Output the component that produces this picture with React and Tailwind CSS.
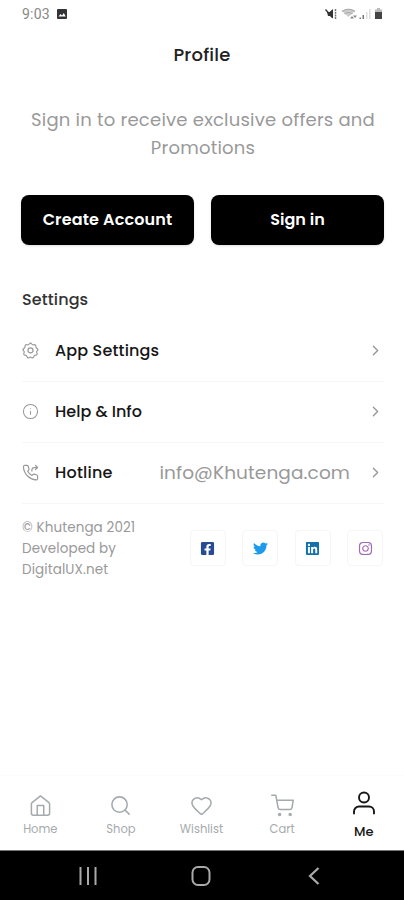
import { ChevronRight, Heart, Info, Search } from "lucide-react";
import {
  FaFacebookSquare,
  FaInstagram,
  FaLinkedin,
  FaTwitter,
} from "react-icons/fa";

const GearIcon = ({ className }) => (
  <svg
    viewBox="0 0 24 24"
    fill="none"
    stroke="currentColor"
    strokeWidth="1.7"
    strokeLinejoin="round"
    className={className}
  >
    <path d="M10.300 2.800q1.700-2.600 3.400 0 1 1.600 2.900 1.100 3-.7 2.900 2.300-.1 1.900 1.500 2.800 2.600 1.500.4 3.500-1.400 1.300-.4 2.900 1.200 2.800-1.800 3.200-1.900.2-2.500 2-1 2.900-3.300 1.200-1.500-1.200-3 0-2.400 1.700-3.300-1.200-.6-1.800-2.500-2-3-.4-1.800-3.200 1-1.600-.4-2.900-2.200-2 .4-3.500 1.600-.9 1.500-2.800-.1-3 2.900-2.300 2 .5 3.100-1.100z" />
    <circle cx="12" cy="11.800" r="3.600" />
  </svg>
);

const HotlineIcon = ({ className }) => (
  <svg
    viewBox="0 0 24 24"
    fill="none"
    stroke="currentColor"
    strokeWidth="1.7"
    strokeLinecap="round"
    strokeLinejoin="round"
    className={className}
  >
    <path d="M22 17.500v3a2 2 0 0 1-2.200 2A19.800 19.800 0 0 1 2 4.200 2 2 0 0 1 4 2h3a2 2 0 0 1 2 1.700l.8 3.300a2 2 0 0 1-.5 1.900L8 10.200a16 16 0 0 0 6 6l1.300-1.300a2 2 0 0 1 1.900-.5l3.200.8a2 2 0 0 1 1.600 2.300z" />
    <path d="M14 10V8a3 3 0 0 1 3-3h5M19 2l3 3-3 3" />
  </svg>
);

const HomeIcon = ({ className }) => (
  <svg
    viewBox="0 0 24 24"
    fill="none"
    stroke="currentColor"
    strokeWidth="1.6"
    strokeLinejoin="round"
    className={className}
  >
    <path d="M2.500 10.500q0-1 1-1.800L12 2l8.500 6.700q1 .8 1 1.800v9.700a2 2 0 0 1-2 2h-15a2 2 0 0 1-2-2z" />
    <path d="M8.600 22.200V12h6.800v10.200" />
  </svg>
);

const CartIcon = ({ className }) => (
  <svg
    viewBox="0 0 24 24"
    fill="none"
    stroke="currentColor"
    strokeWidth="1.6"
    strokeLinecap="round"
    strokeLinejoin="round"
    className={className}
  >
    <path d="M.8 1.200h4.200l2.400 13a2.400 2.400 0 0 0 2.400 2h9.800a2.400 2.400 0 0 0 2.300-2L23.200 6.500H6" />
    <circle cx="9" cy="21.300" r="1" />
    <circle cx="20" cy="21.300" r="1" />
  </svg>
);

const UserIcon = ({ className }) => (
  <svg
    viewBox="0 0 24 24"
    fill="none"
    stroke="currentColor"
    strokeWidth="1.9"
    strokeLinecap="round"
    className={className}
  >
    <circle cx="12" cy="6.500" r="5" />
    <path d="M2 22.500v-2a5 5 0 0 1 5-5h10a5 5 0 0 1 5 5v2" />
  </svg>
);

const settings = [
  { name: "App Settings", icon: GearIcon, text: "tracking-[0.15px]" },
  { name: "Help & Info", icon: Info, text: "tracking-[0px]" },
  {
    name: "Hotline",
    icon: HotlineIcon,
    text: "tracking-[0.2px]",
    value: "info@Khutenga.com",
  },
];

const socials = [
  { name: "Facebook", icon: FaFacebookSquare, color: "text-[#284b96]" },
  { name: "Twitter", icon: FaTwitter, color: "text-[#1d9bea]" },
  { name: "LinkedIn", icon: FaLinkedin, color: "text-[#1470ab]" },
  { name: "Instagram", icon: FaInstagram, color: "text-[#a06cb5]" },
];

const tabs = [
  { name: "Home", icon: HomeIcon },
  { name: "Shop", icon: Search },
  { name: "Wishlist", icon: Heart },
  { name: "Cart", icon: CartIcon },
  { name: "Me", icon: UserIcon, active: true },
];

const StatusBar = () => (
  <div className="flex h-[27px] items-center justify-between pr-5 pl-[22px] text-[#777]">
    <div className="flex items-center gap-[7px]">
      <span className="font-['Roboto',sans-serif] text-sm tracking-[0.2px] text-[#888]">
        9:03
      </span>
      <svg viewBox="0 0 10 10" className="size-[10px]">
        <rect width="10" height="10" rx="1" fill="#333" />
        <path d="M1.500 7.500l2-2.500 1.500 1.500L6.800 4l2 3.500z" fill="#fff" />
      </svg>
    </div>
    <svg viewBox="0 0 60 12" className="h-3 w-[60px]">
      {/* muted speaker */}
      <path d="M3 4h2.500L9 1v9.500L6 8H4z" fill="#333" />
      <path d="M1.500 1.500l7 8" stroke="#333" strokeWidth="1.3" />
      <path d="M11.500 1v10" stroke="#777" strokeWidth="1.5" strokeDasharray="2 .7" />
      {/* wifi */}
      <path d="M18 3q6.500-4.500 13 0l-6.500 6z" fill="#ccc" />
      <path
        d="M18 3.500q6.500-4.500 13 0M20.500 6q4-3 8 0"
        fill="none"
        stroke="#aaa"
        strokeWidth="1.2"
      />
      <path d="M26 10.500l2-2.500 2 2.500zM29 7.500h4l-2 2.500z" fill="#888" />
      {/* signal */}
      <path d="M35.500 9.500H37V11h-1.500zM38.500 7H40v4h-1.500z" fill="#777" />
      <path d="M42 4h1.500v7H42zM45 1h1.500v10H45z" fill="#ddd" />
      {/* battery */}
      <path d="M53 0h3v1.500h2V4h-7V1.500h2z" fill="#bbb" />
      <path d="M51 4h7v7h-7z" fill="#444" />
    </svg>
  </div>
);

const SettingRow = ({ item }) => (
  <div className="flex h-[61px] items-center border-b border-[#f7f7f7]">
    <item.icon className="mb-[2px] size-[17px] text-[#999]" strokeWidth={1.5} />
    <span
      className={`ml-[16px] text-base font-medium text-[#161616] ${item.text}`}
    >
      {item.name}
    </span>
    <span className="ml-auto text-[18.5px] tracking-[0.1px] text-[#999]">
      {item.value}
    </span>
    <ChevronRight
      className="mb-[2px] ml-[17px] size-[17px] text-[#999]"
      strokeWidth={2}
    />
  </div>
);

const TabItem = ({ tab }) => (
  <div
    className={`flex flex-1 flex-col items-center ${tab.active ? "pt-[15px] pl-px text-[#161616]" : "pt-[18px] text-[#a5abad]"}`}
  >
    <tab.icon
      className={tab.active ? "size-6" : "size-[23px]"}
      strokeWidth={tab.active ? 1.9 : 1.6}
    />
    <span
      className={
        tab.active
          ? "mt-[9px] text-[13px] leading-4 font-medium"
          : "mt-[4px] text-[11.5px] leading-4"
      }
    >
      {tab.name}
    </span>
  </div>
);

export default function App() {
  return (
    <div className="flex h-[900px] w-[404px] flex-col overflow-hidden bg-white font-['Poppins','Inter',sans-serif]">
      <StatusBar />

      <h1 className="mt-[14px] text-center text-[18px] leading-7 font-medium tracking-[0.2px] text-[#222]">
        Profile
      </h1>

      <main className="flex-1 pr-5 pl-[22px]">
        <p className="mt-[37px] text-center text-[18px] leading-[27.5px] tracking-[0.22px] whitespace-nowrap text-[#999]">
          Sign in to receive exclusive offers and
          <br />
          Promotions
        </p>

        <div className="-ml-px mt-[34px] grid grid-cols-2 gap-[17px]">
          <button className="h-[50px] rounded-lg bg-black text-base font-semibold tracking-[0.15px] whitespace-nowrap text-white shadow-sm">
            Create Account
          </button>
          <button className="h-[50px] rounded-lg bg-black text-base font-semibold text-white shadow-sm">
            Sign in
          </button>
        </div>

        <h2 className="mt-[43px] text-base leading-6 font-medium tracking-[0.1px] text-[#333]">
          Settings
        </h2>

        <div className="mt-[9px]">
          {settings.map((item) => (
            <SettingRow key={item.name} item={item} />
          ))}
        </div>

        <div className="mt-[13px] flex items-center justify-between">
          <p className="text-[13.5px] leading-[21px] tracking-[0.1px] text-[#999]">
            © Khutenga 2021
            <br />
            Developed by
            <br />
            DigitalUX.net
          </p>
          <div className="mr-px mb-px flex gap-[16.5px]">
            {socials.map((item) => (
              <div
                key={item.name}
                className="flex size-9 items-center justify-center rounded-sm border border-[#f6f6f6]"
              >
                <item.icon className={`size-[15px] ${item.color}`} />
              </div>
            ))}
          </div>
        </div>
      </main>

      <nav className="flex h-[75px] border-t border-[#fbfbfb]">
        {tabs.map((tab) => (
          <TabItem key={tab.name} tab={tab} />
        ))}
      </nav>

      <div className="flex h-[50px] items-center justify-between border-t border-[#777] bg-black pr-[84px] pl-[79px] text-[#aaa]">
        <svg viewBox="0 0 18 18" className="size-[18px]">
          <path d="M1.500 0v18M9 0v18M16.500 0v18" stroke="currentColor" strokeWidth="2" />
        </svg>
        <svg viewBox="0 0 20 20" className="mr-[4px] size-5" fill="none">
          <rect x="1.500" y="1" width="17" height="18" rx="5.500" stroke="currentColor" strokeWidth="2" />
        </svg>
        <svg viewBox="0 0 12 18" className="h-[18px] w-3" fill="none">
          <path d="M10.500 1L2 9l8.500 8" stroke="currentColor" strokeWidth="2.2" />
        </svg>
      </div>
    </div>
  );
}
